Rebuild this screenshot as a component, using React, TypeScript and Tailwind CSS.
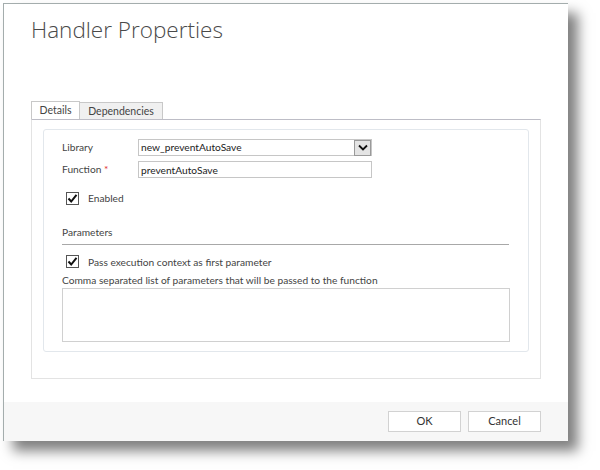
import React, { useState } from "react";

const font = { fontFamily: 'Lato, "Open Sans", sans-serif' };

const Check = ({ checked, onToggle }: { checked: boolean; onToggle: () => void }) => (
  <button
    type="button"
    onClick={onToggle}
    className="w-[13px] h-[13px] border border-[#555] bg-white flex items-center justify-center shrink-0"
  >
    {checked && (
      <svg width="11" height="11" viewBox="0 0 11 11">
        <path d="M1.5 5.5 L4.2 8.5 L9.5 1.8" fill="none" stroke="#111" strokeWidth="2" />
      </svg>
    )}
  </button>
);

const App = () => {
  const [tab, setTab] = useState<"details" | "deps">("details");
  const [enabled, setEnabled] = useState(true);
  const [passContext, setPassContext] = useState(true);
  const [fn, setFn] = useState("preventAutoSave");
  const [params, setParams] = useState("");

  return (
    <div className="w-[600px] h-[470px] bg-white overflow-hidden text-[#444]" style={font}>
      <div className="ml-[3px] mt-[3px] w-[565px] h-[438px] bg-white border-l border-t border-[#a4adad] shadow-[10px_10px_12px_rgba(0,0,0,0.5)] flex flex-col">
        <div className="flex-1 pl-[27px] pt-[12px]">
          <h1
            className="text-[22.5px] leading-[28px] font-light text-[#4a4a4a]"
            style={{ fontFamily: '"Open Sans", sans-serif' }}
          >
            Handler Properties
          </h1>

          <div className="mt-[57px] flex items-end h-[18px] text-[10.5px] leading-none">
            <button
              onClick={() => setTab("details")}
              className={`h-[18px] w-[49px] border border-b-0 border-[#c8c8c8] ${tab === "details" ? "bg-white" : "bg-[#f0f0f0]"}`}
            >
              Details
            </button>
            <button
              onClick={() => setTab("deps")}
              className={`h-[17px] w-[83px] border border-l-0 border-b-0 border-[#c8c8c8] ${tab === "deps" ? "bg-white" : "bg-[#f0f0f0]"}`}
            >
              Dependencies
            </button>
          </div>

          <div className="w-[510px] h-[260px] border border-[#e3e3e3] border-t-[#bdbdc6] px-[11px] pt-[9px] pb-[26px]">
            <div className="h-full border border-[#e2e7ec] rounded-[3px] px-[18px] pt-[9px] text-[10.2px] leading-none">
              <div className="flex items-center h-[17px]">
                <span className="w-[76px]">Library</span>
                <div className="w-[234px] h-[17px] border border-[#c6c6c6] flex items-center">
                  <span className="flex-1 pl-[2px] text-[#222]">new_preventAutoSave</span>
                  <div className="w-[17px] h-[16px] bg-[#e4e4e4] border border-[#9a9a9a] flex items-center justify-center">
                    <svg width="10" height="7" viewBox="0 0 10 7">
                      <path d="M1 1.5 L5 5.5 L9 1.5" fill="none" stroke="#111" strokeWidth="1.8" />
                    </svg>
                  </div>
                </div>
              </div>

              <div className="flex items-center h-[17px] mt-[5px]">
                <span className="w-[76px]">
                  Function <span className="text-[#e03030]">*</span>
                </span>
                <input
                  value={fn}
                  onChange={(e) => setFn(e.target.value)}
                  className="w-[234px] h-[17px] border border-[#c6c6c6] pl-[2px] text-[#222] outline-none"
                />
              </div>

              <div className="flex items-center mt-[14px] pl-[4px] gap-[9px]">
                <Check checked={enabled} onToggle={() => setEnabled(!enabled)} />
                <span>Enabled</span>
              </div>

              <div className="mt-[22px]">Parameters</div>
              <div className="mt-[7px] w-[447px] border-t border-[#a8a8a8]" />

              <div className="flex items-center mt-[10px] pl-[4px] gap-[9px]">
                <Check checked={passContext} onToggle={() => setPassContext(!passContext)} />
                <span>Pass execution context as first parameter</span>
              </div>

              <div className="mt-[7px]">Comma separated list of parameters that will be passed to the function</div>
              <textarea
                value={params}
                onChange={(e) => setParams(e.target.value)}
                className="block mt-[3px] w-[448px] h-[54px] border border-[#d0d0d0] resize-none outline-none"
              />
            </div>
          </div>
        </div>

        <div className="h-[39px] bg-[#f7f7f7] flex justify-end items-start pt-[9px] pr-[27px] gap-[7px] text-[11px]">
          <button className="w-[73px] h-[21px] bg-white border border-[#d2d2d2] text-[#333]">OK</button>
          <button className="w-[73px] h-[21px] bg-white border border-[#d2d2d2] text-[#333]">Cancel</button>
        </div>
      </div>
    </div>
  );
};

export default App;
